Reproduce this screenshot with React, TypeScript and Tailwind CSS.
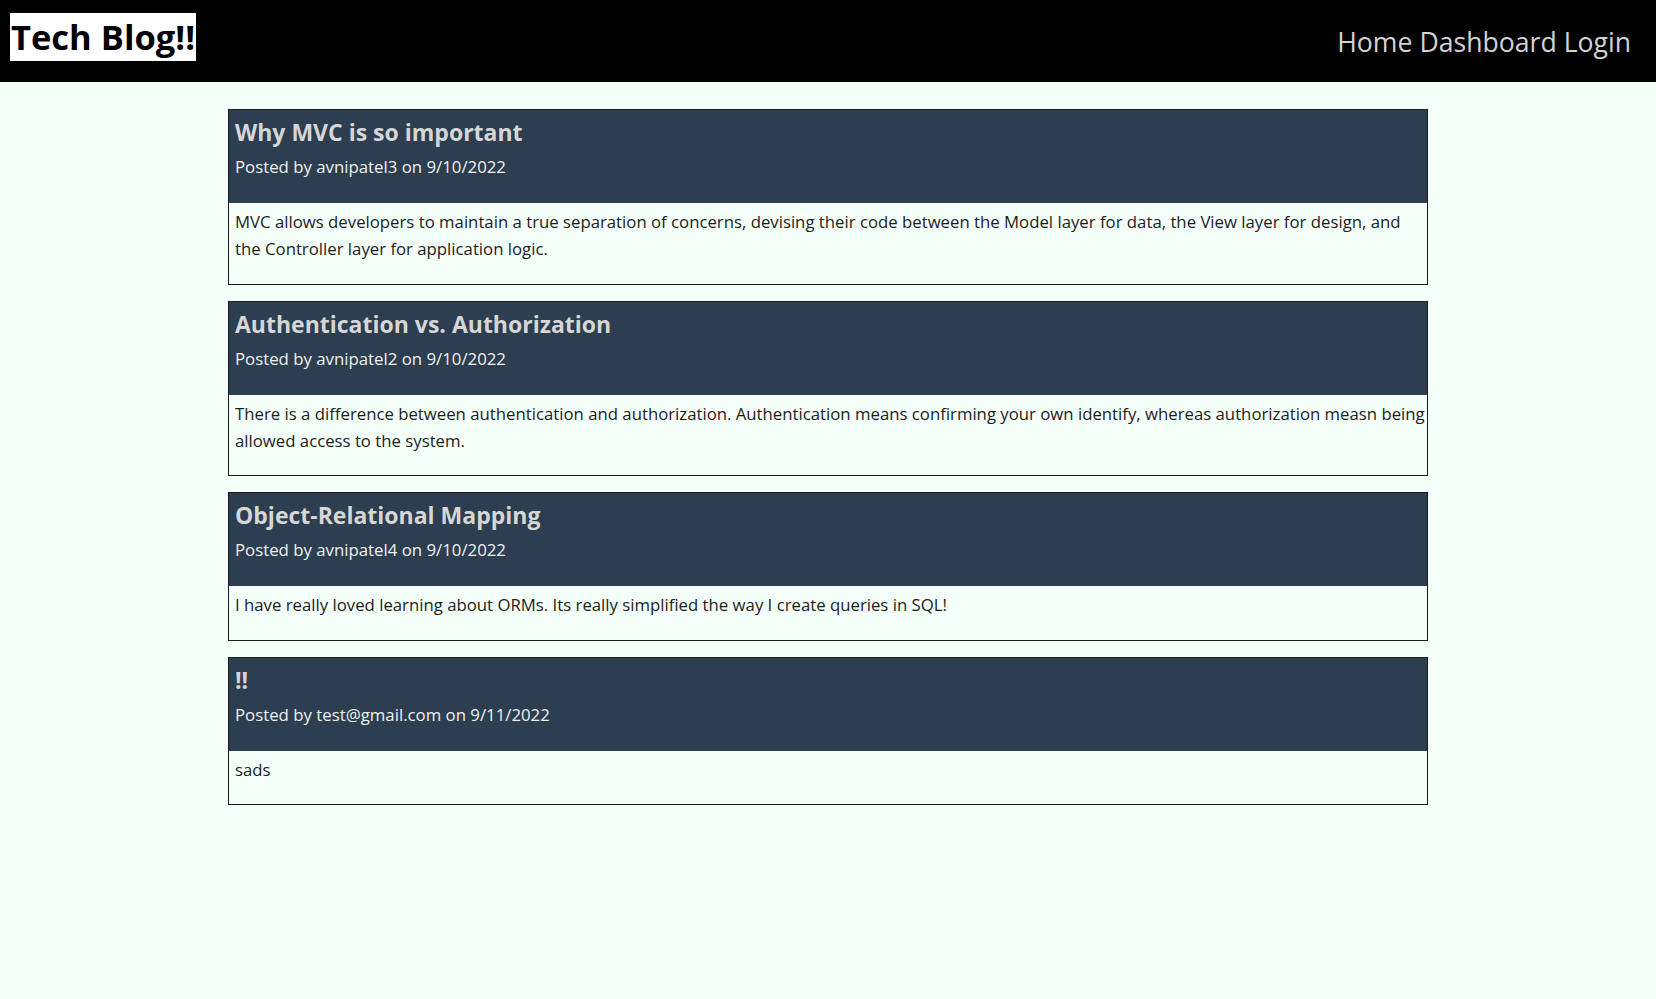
const posts = [
  {
    title: 'Why MVC is so important',
    author: 'avnipatel3',
    date: '9/10/2022',
    body: 'MVC allows developers to maintain a true separation of concerns, devising their code between the Model layer for data, the View layer for design, and the Controller layer for application logic.',
  },
  {
    title: 'Authentication vs. Authorization',
    author: 'avnipatel2',
    date: '9/10/2022',
    body: 'There is a difference between authentication and authorization. Authentication means confirming your own identify, whereas authorization measn being allowed access to the system.',
  },
  {
    title: 'Object-Relational Mapping',
    author: 'avnipatel4',
    date: '9/10/2022',
    body: 'I have really loved learning about ORMs. Its really simplified the way I create queries in SQL!',
  },
  {
    title: '!!',
    author: 'test@gmail.com',
    date: '9/11/2022',
    body: 'sads',
  },
]

function PostCard({ post }: { post: (typeof posts)[number] }) {
  return (
    <article className="border border-[#1b1b1b] w-[1200px]">
      <div className="bg-[#2c3e50] h-[93px] px-[6px] pt-[7px]">
        <h2 className="text-[23px] leading-[31px] font-bold text-[#d6d6d6]">{post.title}</h2>
        <p className="mt-[7px] text-[16.8px] leading-[24px] text-[#f0f0f0]">
          Posted by {post.author} on {post.date}
        </p>
      </div>
      <div className="pl-[6px] pt-[5px] pb-[21.5px]">
        <p className="text-[16.75px] leading-[27px] text-[#1c1c1c]">{post.body}</p>
      </div>
    </article>
  )
}

export default function App() {
  return (
    <div className="min-h-screen bg-[#f5fffa] font-['Open_Sans',sans-serif]">
      <header className="h-[82px] bg-black flex justify-between items-start pl-[10px] pr-[25px] pt-[13px]">
        <h1 className="bg-white text-black text-[34.5px] leading-[48px] font-bold px-[1px]">Tech Blog!!</h1>
        <nav className="mt-[11px] flex gap-[7px] text-[26.6px] leading-[36px] text-[#d3d3d3]">
          <a href="#">Home</a>
          <a href="#">Dashboard</a>
          <a href="#">Login</a>
        </nav>
      </header>

      <main className="pl-[228px] pt-[27px] flex flex-col gap-4">
        {posts.map(post => (
          <PostCard key={post.title} post={post} />
        ))}
      </main>
    </div>
  )
}
